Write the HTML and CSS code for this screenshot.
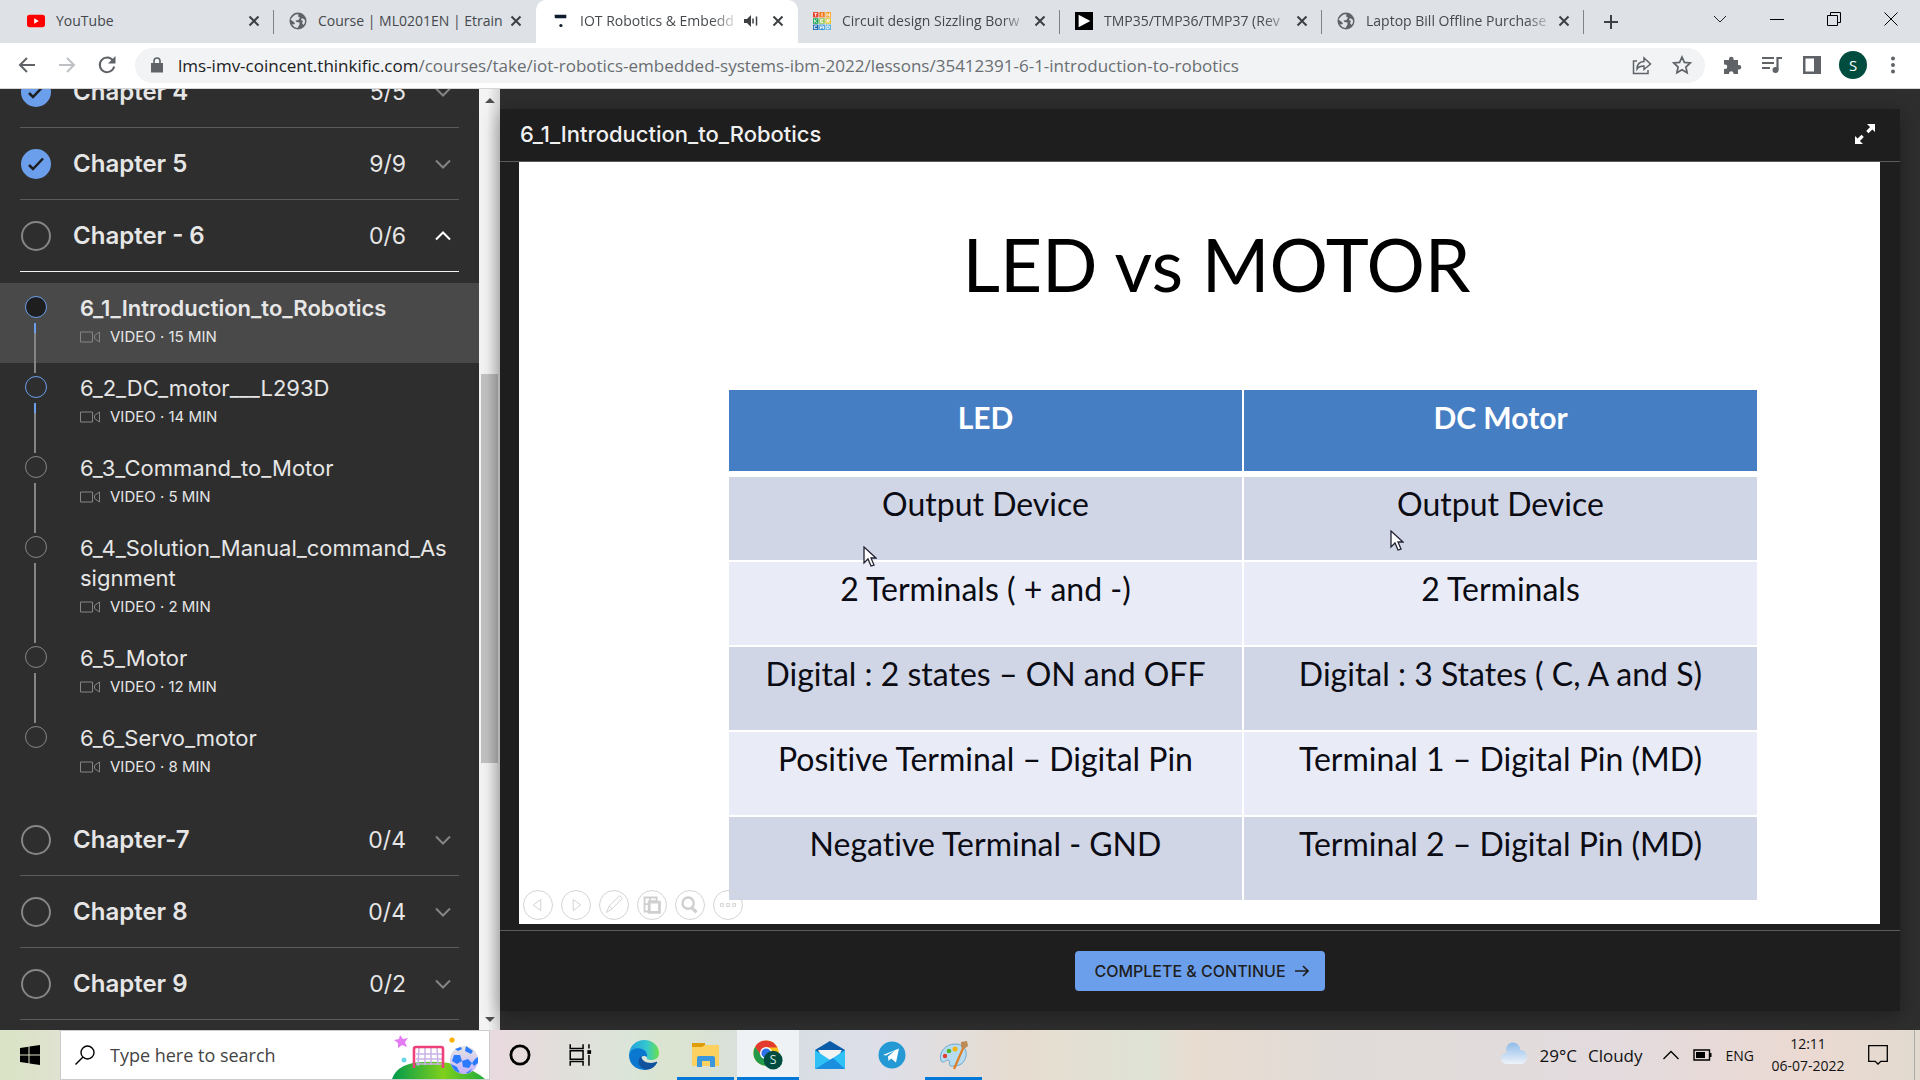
FILE: index.html
```html
<!DOCTYPE html>
<html lang="en">
<head>
<meta charset="utf-8">
<title>IOT Robotics &amp; Embedded Systems</title>
<link rel="stylesheet" href="styles.css">
</head>
<body>
<svg class="defs" aria-hidden="true">
  <symbol id="globe" viewBox="0 0 18 18"><circle cx="9" cy="9" r="8.5" fill="#5f6368"/><path d="M4 4.500q3-3 5.500-2l-.5 2 2 1-1.500 2.500-3 .5 1 1.500 3 .5v2l-2 3.500q-4-.5-5.500-4l2 .5 1-1.500-2.500-2-2-1.500zM13 6l3 2q.5 3-1.500 5l-1.500-2 1-2-2-1z" fill="#dee1e6"/></symbol>
  <symbol id="close" viewBox="0 0 12 12"><path d="M1.500 1.500l9 9m0-9l-9 9" stroke="#3c4043" stroke-width="2" fill="none"/></symbol>
  <symbol id="down" viewBox="0 0 16 10"><path d="M1 1.500l7 7 7-7" stroke="currentColor" stroke-width="2" fill="none"/></symbol>
  <symbol id="cam" viewBox="0 0 20 12"><path d="M.5 1h12v10H.5zM14.500 4.500l5-3.500v10l-5-3.500z" stroke="#858585" fill="none"/></symbol>
  <symbol id="tick" viewBox="0 0 16 14"><path d="M1 8l4 4L15 1.500" stroke="#1e1e1e" stroke-width="2.500" fill="none"/></symbol>
  <symbol id="pointer" viewBox="0 0 14 22"><path d="M1 1v16l4-4 3 7 3-1-3-7h5z" fill="#fff" stroke="#223" stroke-width="1.300"/></symbol>
</svg>

<header>
  <nav class="tabs" aria-label="Tabs">
    <div class="tab"><svg class="fav" viewBox="0 0 20 18"><rect y="2" width="20" height="14" rx="3" fill="#f00"/><path d="M8 6l5 3-5 3z" fill="#fff"/></svg><span class="tab-title">YouTube</span><button class="tab-close" aria-label="Close tab"><svg><use href="#close"/></svg></button></div>
    <div class="tab"><svg class="fav"><use href="#globe"/></svg><span class="tab-title">Course | ML0201EN | Etrain</span><button class="tab-close" aria-label="Close tab"><svg><use href="#close"/></svg></button></div>
    <div class="tab active"><svg class="fav" viewBox="0 0 20 18"><path d="M4 2h13v4H5q-1 0-1-4z" fill="#0d1c2e"/><circle cx="11" cy="14" r="1.800" fill="#0d1c2e"/></svg><span class="tab-title fade">IOT Robotics &amp; Embedd</span><svg class="sound" viewBox="0 0 14 12"><path d="M0 4h3l4-4v12L3 8H0z" fill="#3c4043"/><path d="M9 3.500v5M12.500 1.500v9" stroke="#3c4043" stroke-width="1.500"/></svg><button class="tab-close" aria-label="Close tab"><svg><use href="#close"/></svg></button></div>
    <div class="tab"><svg class="fav" viewBox="0 0 20 20"><path d="M0 0h6v6H0z" fill="#e8402a"/><path d="M7 0h6v6H7z" fill="#f47b20"/><path d="M14 0h6v6h-6z" fill="#f99d1c"/><path d="M0 7h6v6H0z" fill="#0ba14a"/><path d="M7 7h6v6H7z" fill="#8cc63f"/><path d="M14 7h6v6h-6z" fill="#e3c01c"/><path d="M0 14h6v6H0z" fill="#1666b0"/><path d="M7 14h6v6H7z" fill="#2a8fd6"/><path d="M14 14h6v6h-6z" fill="#5fb5e6"/><path d="M1.500 1.500h3M3 1.500V5M10 1v4M15.500 5V1.500L18.500 5V1M1.500 8v4M4.500 8l-2 2 2 2M11.500 8.500h-3v3h3M8.500 10h2.500M15.500 12V8.500h3v1.500h-3l3 2M4.500 15.500h-3v3h3M8.500 19v-3.500h3V19M8.500 17.500h3M15.500 15.500h2l1 1.500-1 1.500h-2z" stroke="#fff" fill="none"/></svg><span class="tab-title fade">Circuit design Sizzling Borw</span><button class="tab-close" aria-label="Close tab"><svg><use href="#close"/></svg></button></div>
    <div class="tab"><svg class="fav" viewBox="0 0 20 20"><path d="M0 0h20v20H0z"/><path d="M4 3l13 7-13 7z" fill="#fff"/></svg><span class="tab-title fade">TMP35/TMP36/TMP37 (Rev</span><button class="tab-close" aria-label="Close tab"><svg><use href="#close"/></svg></button></div>
    <div class="tab"><svg class="fav"><use href="#globe"/></svg><span class="tab-title fade">Laptop Bill Offline Purchase</span><button class="tab-close" aria-label="Close tab"><svg><use href="#close"/></svg></button></div>
    <button class="newtab" aria-label="New tab"><svg viewBox="0 0 16 16"><path d="M8 1v14M1 8h14" stroke="#3c4043" stroke-width="2"/></svg></button>
    <div class="win">
      <button aria-label="Search tabs"><svg viewBox="0 0 14 14"><path d="M1 4l6 6 6-6" stroke="#222" fill="none"/></svg></button>
      <button aria-label="Minimize"><svg viewBox="0 0 14 14"><path d="M0 7.500h14" stroke="#000"/></svg></button>
      <button aria-label="Restore"><svg viewBox="0 0 14 14"><path d="M.5 3.500h10v10H.5zM3.500 3V.5h10v10H11" stroke="#000" fill="none"/></svg></button>
      <button aria-label="Close"><svg viewBox="0 0 14 14"><path d="M.5.5l13 13m0-13l-13 13" stroke="#000" fill="none"/></svg></button>
    </div>
  </nav>
  <div class="toolbar">
    <div class="navs">
      <button aria-label="Back"><svg viewBox="0 0 20 20"><path d="M18 10H3M10 3l-7 7 7 7" stroke="#5f6368" stroke-width="2" fill="none"/></svg></button>
      <button aria-label="Forward"><svg viewBox="0 0 20 20"><path d="M2 10h15M10 3l7 7-7 7" stroke="#bdc1c6" stroke-width="2" fill="none"/></svg></button>
      <button aria-label="Reload"><svg viewBox="0 0 20 20"><path d="M16 5.500A7.300 7.300 0 1 0 17.200 11.500" stroke="#5f6368" stroke-width="2" fill="none"/><path d="M18.500 1v7.500H11z" fill="#5f6368"/></svg></button>
    </div>
    <div class="omni">
      <svg class="lock" viewBox="0 0 12 16"><path d="M0 6h12v9.500H0z" fill="#5f6368"/><path d="M3 6V4a3 3 0 0 1 6 0v2" stroke="#5f6368" stroke-width="1.600" fill="none"/></svg>
      <div class="url"><span>lms-imv-coincent.thinkific.com</span>/courses/take/iot-robotics-embedded-systems-ibm-2022/lessons/35412391-6-1-introduction-to-robotics</div>
      <button aria-label="Share"><svg viewBox="0 0 20 20"><path d="M5 6H1.500v12.500H16V15M5 14q0-7 7-7.500V3l6.500 6L12 14.500V11q-5 0-7 3z" stroke="#5f6368" stroke-width="1.500" fill="none"/></svg></button>
      <button aria-label="Bookmark"><svg viewBox="0 0 20 20"><path d="M10 2l2.400 5.400 5.900.6-4.400 4 1.200 5.800-5.100-3-5.100 3L6.100 12 1.700 8l5.900-.6z" stroke="#5f6368" stroke-width="1.700" fill="none"/></svg></button>
    </div>
    <div class="exts">
      <button aria-label="Extensions"><svg viewBox="0 0 20 20"><path d="M2 5h5V4a2.300 2.300 0 0 1 4.600 0v1H16v5h1a2.300 2.300 0 0 1 0 4.600h-1V19h-4.500v-1a2.300 2.300 0 0 0-4.500 0v1H2v-5h1a2.200 2.200 0 0 0 0-4.500H2z" fill="#5f6368"/></svg></button>
      <button aria-label="Media"><svg viewBox="0 0 20 20"><path d="M0 3h12M0 8h12M0 13h8" stroke="#5f6368" stroke-width="2"/><circle cx="13.500" cy="15" r="3" fill="#5f6368"/><path d="M15.500 15V3H20" stroke="#5f6368" stroke-width="2.200" fill="none"/></svg></button>
      <button aria-label="Side panel"><svg viewBox="0 0 20 20"><path d="M1 1h18v18H1zM3.500 3.500v13H12v-13z" fill="#5f6368" fill-rule="evenodd"/></svg></button>
      <button class="avatar" aria-label="Profile">S</button>
      <button aria-label="Menu"><svg viewBox="0 0 20 20"><g fill="#5f6368"><circle cx="10" cy="3.500" r="2"/><circle cx="10" cy="10" r="2"/><circle cx="10" cy="16.500" r="2"/></g></svg></button>
    </div>
  </div>
</header>

<main>
  <aside class="side">
    <div class="list">
      <button class="chapter"><span class="ring done"><svg><use href="#tick"/></svg></span><span class="name">Chapter 4</span><span class="count">5/5</span><svg class="chev"><use href="#down"/></svg></button>
      <button class="chapter"><span class="ring done"><svg><use href="#tick"/></svg></span><span class="name">Chapter 5</span><span class="count">9/9</span><svg class="chev"><use href="#down"/></svg></button>
      <button class="chapter open"><span class="ring"></span><span class="name">Chapter - 6</span><span class="count">0/6</span><svg class="chev"><use href="#down"/></svg></button>
      <ul class="lessons">
        <li class="current next"><a href="#l1">6_1_Introduction_to_Robotics</a><small><svg><use href="#cam"/></svg>VIDEO · 15 MIN</small></li>
        <li class="next"><a href="#l2">6_2_DC_motor___L293D</a><small><svg><use href="#cam"/></svg>VIDEO · 14 MIN</small></li>
        <li><a href="#l3">6_3_Command_to_Motor</a><small><svg><use href="#cam"/></svg>VIDEO · 5 MIN</small></li>
        <li><a href="#l4">6_4_Solution_Manual_command_As<wbr>signment</a><small><svg><use href="#cam"/></svg>VIDEO · 2 MIN</small></li>
        <li><a href="#l5">6_5_Motor</a><small><svg><use href="#cam"/></svg>VIDEO · 12 MIN</small></li>
        <li><a href="#l6">6_6_Servo_motor</a><small><svg><use href="#cam"/></svg>VIDEO · 8 MIN</small></li>
      </ul>
      <button class="chapter"><span class="ring"></span><span class="name">Chapter-7</span><span class="count">0/4</span><svg class="chev"><use href="#down"/></svg></button>
      <button class="chapter"><span class="ring"></span><span class="name">Chapter 8</span><span class="count">0/4</span><svg class="chev"><use href="#down"/></svg></button>
      <button class="chapter"><span class="ring"></span><span class="name">Chapter 9</span><span class="count">0/2</span><svg class="chev"><use href="#down"/></svg></button>
    </div>
  </aside>
  <div class="scroll"><i class="up"></i><div class="track"><div class="thumb"></div></div><i class="dn"></i></div>
  <div class="content">
    <section class="panel">
      <div class="head"><h1>6_1_Introduction_to_Robotics</h1><button aria-label="Full screen"><svg viewBox="0 0 22 22"><path d="M13 1h8v8l-2.600-2.600-3.900 3.900-2.300-2.300 3.900-3.900zM9 21H1v-8l2.600 2.600 3.900-3.900 2.300 2.300-3.900 3.900z" fill="#fff"/></svg></button></div>
      <div class="stage">
        <div class="slide">
          <h2>LED vs MOTOR</h2>
          <table>
            <thead><tr><th>LED</th><th>DC Motor</th></tr></thead>
            <tbody>
              <tr><td>Output Device</td><td>Output Device</td></tr>
              <tr><td>2 Terminals ( + and -)</td><td>2 Terminals</td></tr>
              <tr><td>Digital : 2 states – ON and OFF</td><td>Digital : 3 States ( C, A and S)</td></tr>
              <tr><td>Positive Terminal – Digital Pin</td><td>Terminal 1 – Digital Pin (MD)</td></tr>
              <tr><td>Negative Terminal - GND</td><td>Terminal 2 – Digital Pin (MD)</td></tr>
            </tbody>
          </table>
          <svg class="ptr p1"><use href="#pointer"/></svg>
          <svg class="ptr p2"><use href="#pointer"/></svg>
          <div class="ctl">
            <button aria-label="Previous"><svg viewBox="0 0 30 30"><path d="M18 9v12l-8-6z"/></svg></button>
            <button aria-label="Next"><svg viewBox="0 0 30 30"><path d="M12 9v12l8-6z"/></svg></button>
            <button aria-label="Pen"><svg viewBox="0 0 30 30"><path d="M7 23l3-7L21 5l3 3-11 11zM10 16l3 3"/></svg></button>
            <button aria-label="All slides"><svg viewBox="0 0 30 30"><path d="M7 7h13v4H12v11H7zM7 14h5M13 7v4" stroke-width="2"/><path d="M12 12h11v11H12z" stroke-width="3"/></svg></button>
            <button aria-label="Zoom"><svg viewBox="0 0 30 30"><circle cx="13" cy="13" r="6" stroke-width="2.500"/><path d="M17 18l5 5" stroke-width="3.500"/></svg></button>
            <button aria-label="More"><svg viewBox="0 0 30 30"><path d="M7 13.500h3v3H7zM13.500 13.500h3v3h-3zM20 13.500h3v3h-3z"/></svg></button>
          </div>
        </div>
      </div>
      <div class="foot"><button class="go">COMPLETE &amp; CONTINUE <svg viewBox="0 0 14 12"><path d="M0 6h13M8 1l5 5-5 5" stroke="#1e1e1e" stroke-width="1.600" fill="none"/></svg></button></div>
    </section>
  </div>
</main>

<footer>
  <button class="start" aria-label="Start"><svg viewBox="0 0 20 20"><path d="M0 3l8.500-1.200v7.700H0zM9.500 1.600L20 0v9.500H9.500zM0 10.500h8.500v7.700L0 17zM9.500 10.500H20V20L9.500 18.400z"/></svg></button>
  <label class="search"><svg class="glass" viewBox="0 0 20 20"><circle cx="12.500" cy="7.500" r="6.500" stroke="#000" stroke-width="1.400" fill="none"/><path d="M8 12l-7.500 7.500" stroke="#000" stroke-width="1.400"/></svg>
    <input type="text" placeholder="Type here to search" aria-label="Search">
    <svg class="art" viewBox="0 0 96 48"><defs><linearGradient id="hill"><stop stop-color="#009a4c"/><stop offset=".55" stop-color="#7fd01c"/><stop offset="1" stop-color="#1fae3a"/></linearGradient><linearGradient id="ball" x2="0" y2="1"><stop stop-color="#e6e6e0"/><stop offset="1" stop-color="#c3b0ff"/></linearGradient></defs><path d="M0 48Q6 31 33 31 70 29 93 48z" fill="url(#hill)"/><path d="M27 17l-1 18M33 17v17M39 17v17M45 17l1 17M24 23h27M24 28h27M24 33h27" stroke="#c9b3e6" stroke-width="1.500"/><path d="M22 37V18q0-2 2-2h25q2 0 2 2v19" stroke="#f0407a" stroke-width="2.600" fill="none"/><circle cx="72" cy="29" r="14" fill="url(#ball)"/><path d="M68 24h-6l-2 6 5 3 5-3zM74 15l7 5-2 3-6-3zM83 28l3-2v6l-4 3-2-3zM70 30l6-2 4 4-3 5-6-1zM59 33l6 3 3 6q-7-2-9-9zM74 42l6-4q-2 5-6 4zM63 18l6-2 1 2-4 2z" fill="#2a7bff"/><path d="M8 4l3 4 5-1-3 4 2 5-5-2-4 3v-5l-4-3 5-1z" fill="#e57af5"/><circle cx="60" cy="9" r="2.600" fill="#ffb000"/><circle cx="12" cy="29" r="2.500" fill="#6cd6e8"/></svg>
  </label>
  <div class="apps">
    <button aria-label="Cortana"><svg viewBox="0 0 28 28"><circle cx="14" cy="14" r="8.500" stroke="#000" stroke-width="2.600" fill="none"/></svg></button>
    <button aria-label="Task view"><svg viewBox="0 0 28 28"><path d="M3 4v4h12V4M3 24v-4h12v4M3 10h12v8H3zM20.500 4v4M20.500 14v10" stroke="#000" stroke-width="1.400" fill="none"/><path d="M19 9.500h3.500V13H19z"/></svg></button>
    <button aria-label="Edge"><svg viewBox="0 0 30 30"><defs><linearGradient id="e1"><stop stop-color="#1f9ee0"/><stop offset=".6" stop-color="#35c8cf"/><stop offset="1" stop-color="#6be04a"/></linearGradient></defs><path d="M0 14C1 5 8 0 15 0c9 0 15 6 15 13 0 5-4 7-7 7-4 0-6-1-5-3 1-4-2-8-8-8C6 9 1 11 0 14z" fill="url(#e1)"/><path d="M0 15C1 9 8 7 13 9c4 1 6 5 5 8-5-3-8 2-6 6 1 3 3 5 6 6.700C8 31 0 25 0 15z" fill="#0b78d0"/><path d="M12 16c-5 5-2 13 6 13.700 5-.7 8-3 10-6.700 1-2-1-1-3-.5-6 1.500-12-1-13-6.500z" fill="#10529e"/></svg></button>
    <button class="running" aria-label="File Explorer"><svg viewBox="0 0 30 28"><path d="M1 2h13v5H1z" fill="#dd9c08"/><path d="M1 6h10l3-2h14v21H1z" fill="#fcd160"/><path d="M6 25v-8q0-2 2-2h14q2 0 2 2v9h-5v-6h-8v6H6z" fill="#3b97dd"/></svg></button>
    <button class="running focus" aria-label="Chrome"><svg viewBox="0 0 32 32"><circle cx="14" cy="14" r="13.500" fill="#fbc116"/><path d="M14 .5A13.500 13.500 0 0 0 2.300 7.300L9 18l5-10h12A13.500 13.500 0 0 0 14 .5z" fill="#e33b2e"/><path d="M2.300 7.300A13.500 13.500 0 0 0 14 27.500L19 18 9 17z" fill="#229a4a"/><circle cx="14" cy="14" r="6.500" fill="#fff"/><circle cx="14" cy="14" r="5" fill="#2d72e8"/><circle cx="21.500" cy="21.500" r="10" fill="#004d40"/><text x="21.500" y="26" text-anchor="middle" class="s">S</text></svg></button>
    <button aria-label="Mail"><svg viewBox="0 0 30 28"><path d="M0 9L15 0l15 9v4H0z" fill="#0a5ba8"/><path d="M3 9h24l-5 9H8z" fill="#f3f3f3"/><path d="M0 9l15 10 15-10v19H0z" fill="#2fc0f5"/><path d="M0 28l18-11 12 11z" fill="#1a8fe0"/></svg></button>
    <button aria-label="Telegram"><svg viewBox="0 0 30 30"><circle cx="15" cy="15" r="13.500" fill="#2499d3"/><path d="M6 15l16-6.500-3 14-5-4-2.500 2.500-.5-4.500 7-6-9 5z" fill="#fff"/></svg></button>
    <button class="running" aria-label="Paint"><svg viewBox="0 0 30 30"><path d="M2 21C-1 12 7 4 16 4c9 0 12 6 11 12-1 7-7 11-15 10-4-1 1-5-3-6-3 0-4 4-7 1z" fill="#b5dcf0" stroke="#6fa8cc"/><circle cx="6" cy="16" r="2.200" fill="#e43d30"/><circle cx="10" cy="11" r="2.300" fill="#4cb52c"/><circle cx="16" cy="9" r="2.500" fill="#f5b30c"/><path d="M15 29L25 6" stroke="#de7d22" stroke-width="2.200"/><path d="M22 2l6-1 1 5-4 3-3-2z" fill="#bb8a55"/></svg></button>
  </div>
  <div class="tray">
    <button class="weather"><svg viewBox="0 0 28 28"><defs><linearGradient id="cl" x2="0" y2="1"><stop stop-color="#8fbbe8"/><stop offset="1" stop-color="#eef3fa"/></linearGradient></defs><path d="M7 12a7 7 0 1 1 13-3 6 7 0 0 1 2 14H6A5.500 5.500 0 0 1 7 12z" fill="url(#cl)"/></svg><span>29°C</span><span>Cloudy</span></button>
    <svg class="t-chev" viewBox="0 0 16 10"><path d="M.5 9L8 1.500 15.500 9" stroke="#000" stroke-width="1.300" fill="none"/></svg>
    <svg class="bat" viewBox="0 0 19 12"><path d="M1 1h15.500v10H1z" stroke="#000" stroke-width="1.400" fill="none"/><path d="M3 3h9v6H3zM17 4h1.500v4H17z"/></svg>
    <span class="eng">ENG</span>
    <div class="clock"><span>12:11</span><span>06-07-2022</span></div>
    <button class="note" aria-label="Notifications"><svg viewBox="0 0 20 20"><path d="M.7.700h18.600v15.600h-6.500L10 19l-2.800-2.700H.7z" stroke="#000" stroke-width="1.300" fill="none"/></svg></button>
    <i class="peek"></i>
  </div>
</footer>
</body>
</html>
```
FILE: styles.css
```css
* { box-sizing: border-box; }
body { margin: 0; height: 100vh; display: flex; flex-direction: column; overflow: hidden; font-family: "Open Sans", sans-serif; background: #2e2e2e; }
button { border: 0; padding: 0; background: none; font: inherit; color: inherit; display: flex; align-items: center; justify-content: center; flex: none; }
svg { display: block; flex: none; }
.defs { position: absolute; width: 0; height: 0; }

/* tab strip */
.tabs { display: flex; align-items: stretch; height: 43px; background: #dee1e6; padding-left: 12px; }
.tab { position: relative; flex: 0 1 262px; min-width: 0; display: flex; align-items: center; padding: 0 14px 2px; color: #45494d; font-size: 14px; }
.tab::after { content: ""; position: absolute; right: 0; top: 10px; width: 1px; height: 24px; background: #808489; }
.tab.active { background: #fff; border-radius: 10px 10px 0 0; }
.tab.active::after, .tab:has(+ .active)::after { display: none; }
.fav { width: 18px; height: 18px; margin: 0 11px 0 1px; }
.tab-title { flex: 1; min-width: 0; overflow: hidden; white-space: nowrap; }
.fade { mask-image: linear-gradient(to left, transparent, #000 28px); }
.sound { width: 14px; height: 12px; margin: 0 10px 0 4px; }
.tab-close { width: 12px; margin-left: 4px; }
.tab-close svg { width: 12px; height: 12px; }
.newtab { width: 54px; }
.newtab svg { width: 16px; height: 16px; }
.win { display: flex; margin-left: auto; padding: 0 1px 6px 0; }
.win button { width: 57px; }
.win svg { width: 14px; height: 14px; }

/* address bar */
.toolbar { display: flex; align-items: center; height: 46px; padding: 0 7px 1px 7px; background: #fff; border-bottom: 1px solid #d5d5d5; }
.navs, .exts { display: flex; align-items: center; }
.navs button, .exts button { width: 40px; }
.navs { width: 128px; }
.navs svg, .exts svg, .omni button svg { width: 20px; height: 20px; }
.omni { flex: 1; min-width: 0; height: 35px; display: flex; align-items: center; padding: 0 3px 0 16px; border-radius: 18px; background: #f1f3f4; }
.omni button { width: 40px; }
.lock { width: 12px; height: 16px; margin-right: 15px; }
.url { flex: 1; min-width: 0; overflow: hidden; white-space: nowrap; font-size: 17px; color: #6a6e73; }
.url span { color: #202124; }
.exts { padding-left: 7px; }
.exts .avatar { width: 28px; height: 28px; margin: 0 6px 0 7px; border-radius: 50%; background: #004d40; color: #fff; font-size: 15px; }

main { flex: 1; min-height: 0; display: flex; font-family: Inter, sans-serif; color: #e6e6e6; }

/* course outline */
.side { width: 479px; flex: none; overflow: hidden; }
.list { margin-top: -33px; }
.chapter { width: 439px; height: 72px; margin: 0 20px; border-bottom: 1px solid #5a5a5a; justify-content: flex-start; }
.chapter.open { border-color: #f2f2f2; }
.ring { width: 30px; height: 30px; margin: 0 22px 0 1px; border: 2px solid #858585; border-radius: 50%; display: flex; align-items: center; justify-content: center; }
.ring.done { background: #6c9feb; border-color: #6c9feb; }
.ring svg { width: 16px; height: 14px; }
.name { flex: 1; text-align: left; font-size: 24px; font-weight: 600; }
.count { font-size: 23px; }
.chev { width: 16px; height: 10px; margin: 0 8px 0 29px; color: #858585; }
.open .chev { color: #fff; transform: rotate(180deg); }
.lessons { list-style: none; margin: 0; padding: 11px 0; }
.lessons li { position: relative; padding: 10px 24px 18px 80px; }
.lessons li::before { content: ""; position: absolute; left: 25px; top: 13px; width: 20px; height: 20px; border: 1px solid #858585; border-radius: 50%; }
.lessons li:not(:last-child)::after { content: ""; position: absolute; left: 34px; top: 40px; bottom: -10px; width: 2px; background: #858585; z-index: 1; }
.lessons .next::before { border-color: #6c9feb; }
.lessons .next:not(:last-child)::after { background: linear-gradient(#6c9feb 10px, #858585 10px); }
.lessons .current { background: #494949; }
.lessons .current::before { background: #1e1e1e; }
.lessons a { display: block; color: inherit; text-decoration: none; font-size: 22px; line-height: 30px; }
.lessons .current a { font-weight: 600; }
.lessons small { display: flex; align-items: center; gap: 10px; margin-top: 5px; font-size: 15px; line-height: 17px; }
.lessons small svg { width: 20px; height: 12px; }

.scroll { width: 21px; flex: none; display: flex; flex-direction: column; align-items: center; padding: 9px 0 8px; background: linear-gradient(90deg, #f4f4f4 40%, #d6d6d6); }
.track { flex: 1; width: 17px; padding-top: 271px; }
.thumb { height: 389px; background: linear-gradient(90deg, #c2c2c2 40%, #adadad); }
.up, .dn { border: 5px solid transparent; }
.up { border-top: 0; border-bottom-color: #505050; }
.dn { border-bottom: 0; border-top-color: #505050; }

/* lesson player */
.content { flex: 1; min-width: 0; display: flex; padding: 20px 20px 19px 0; }
.panel { flex: 1; min-width: 0; display: flex; flex-direction: column; background: #1e1e1e; box-shadow: 0 4px 20px #0005; }
.head { display: flex; align-items: center; justify-content: space-between; height: 53px; padding: 0 24px 2px 20px; border-bottom: 1px solid #5a5a5a; }
h1 { margin: 0; font-size: 22px; font-weight: 500; color: #f0f0f0; }
.head svg { width: 22px; height: 22px; }
.stage { flex: 1; min-height: 0; display: flex; padding: 0 20px 6px 19px; }
.slide { position: relative; flex: 1; background: #fff; color: #0b0b14; font-family: Lato, sans-serif; font-variant-ligatures: none; }
h2 { margin: 54px 0 0 34px; font-size: 73px; line-height: 96px; font-weight: 400; text-align: center; color: #000; }
table { width: 1032px; margin: 76px 0 0 208px; border-spacing: 2px; table-layout: fixed; }
th, td { height: 83px; padding: 5px 0 0; vertical-align: top; text-align: center; font-size: 32px; line-height: 44px; font-weight: 400; }
th { height: 85px; background: #467ec4 padding-box; color: #fff; font-size: 30px; font-weight: 700; border-bottom: 4px solid #fff; }
tr:nth-child(odd) td { background: #d1d6e6; }
tr:nth-child(even) td { background: #e9ecf7; }
.ptr { position: absolute; width: 14px; height: 22px; }
.p1 { left: 344px; top: 384px; }
.p2 { left: 871px; top: 368px; }
.ctl { position: absolute; left: 4px; bottom: 4px; display: flex; gap: 8px; }
.ctl button { width: 30px; height: 30px; border: 1px solid #d4d4d4; border-radius: 50%; }
.ctl svg { width: 28px; height: 28px; fill: none; stroke: #cfcfcf; }
.foot { display: flex; align-items: center; justify-content: center; height: 81px; border-top: 1px solid #5a5a5a; }
.go { gap: 9px; height: 40px; padding: 0 16px 0 19px; border-radius: 4px; background: #6c9feb; color: #1e1e1e; font-size: 16px; font-weight: 500; }
.go svg { width: 14px; height: 12px; }

/* taskbar */
footer { display: flex; height: 50px; flex: none; color: #111; background: linear-gradient(90deg, #d9e3c4 0, #dfe2cf 3%, #e8dade 26%, #dbe5d8 33%, #dbe4cf 35%, #d6dde2 41%, #dedfe9 46%, #e6dccf 53%, #dfe3d6 60%, #e8dcd0 62%, #e0dbd8 70%, #e3dbde 84%, #ebd9d2 94%, #e2dacf); }
.start { width: 60px; }
.start svg { width: 20px; height: 20px; }
.search { width: 430px; display: flex; align-items: center; padding-left: 14px; background: #fff; border: 1px solid #ccc; flex: none; }
.glass { width: 20px; height: 20px; margin-right: 15px; }
input { flex: 1; min-width: 0; border: 0; padding: 0; background: none; font: 18px "Open Sans", sans-serif; }
input::placeholder { color: #444; opacity: 1; }
.art { width: 98px; height: 48px; align-self: flex-end; }
.apps { display: flex; margin-left: -1px; }
.apps button { width: 62px; border-bottom: 3px solid transparent; padding-top: 3px; }
.apps svg { width: 30px; height: 30px; }
.apps .running { border-image: linear-gradient(90deg, transparent 5px, #0078d7 5px, #0078d7 56px, transparent 56px) 3; }
.apps .focus { background: #eff2f5; border-image: none; border-color: #0078d7; }
.s { font: 13px "Open Sans", sans-serif; fill: #d8e8e4; }
.tray { margin-left: auto; display: flex; align-items: center; font-size: 14px; }
.weather { gap: 11px; font-size: 17px; }
.weather svg { width: 28px; height: 28px; }
.t-chev { width: 16px; height: 10px; margin: 0 14px 0 20px; }
.bat { width: 19px; height: 12px; margin-right: 14px; }
.clock { display: flex; flex-direction: column; align-items: center; width: 80px; margin: 0 20px 0 14px; line-height: 22px; }
.note svg { width: 20px; height: 20px; }
.note { margin-right: 26px; }
.peek { width: 6px; height: 50px; border-left: 1px solid #aaa; }
```
